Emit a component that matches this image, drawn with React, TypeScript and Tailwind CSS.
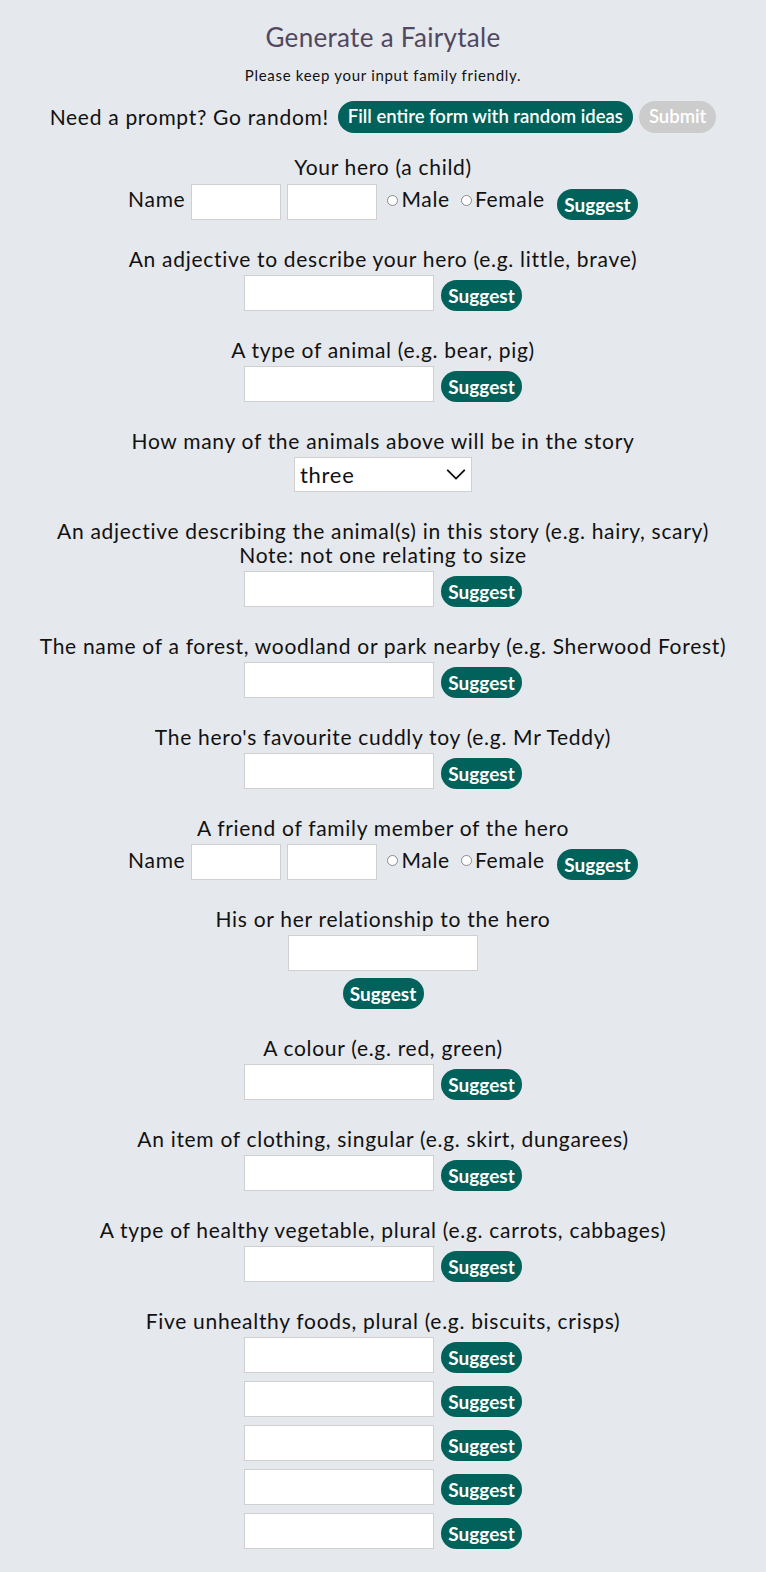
import React from "react";

const labelFont = { fontFamily: "Lato, 'Noto Sans', sans-serif" };

function Suggest() {
  return (
    <button
      type="button"
      className="h-[31px] w-[81px] rounded-full bg-[#00625a] font-['Lato',sans-serif] text-[19px] font-bold leading-none tracking-normal text-white"
    >
      Suggest
    </button>
  );
}

function TextBox({ w = "w-[190px]" }: { w?: string }) {
  return <input type="text" className={`h-[36px] ${w} border border-[#cfcfcf] bg-white`} />;
}

function InputRow() {
  return (
    <div className="flex items-end justify-center gap-[7px]">
      <TextBox />
      <Suggest />
    </div>
  );
}

function Radio({ label }: { label: string }) {
  return (
    <label className="flex items-center gap-[3px]">
      <span className="mt-[3px] inline-block h-[11px] w-[11px] rounded-full border border-[#8a8a8a] bg-white" />
      <span>{label}</span>
    </label>
  );
}

function PersonRow() {
  return (
    <div className="flex items-end justify-center">
      <span className="mb-[5px] mr-[6px]">Name</span>
      <TextBox w="w-[90px]" />
      <span className="w-[6px]" />
      <TextBox w="w-[90px]" />
      <div className="mb-[5px] ml-[10px] mr-[12px] flex gap-[11px]">
        <Radio label="Male" />
        <Radio label="Female" />
      </div>
      <Suggest />
    </div>
  );
}

function Section({ title, children }: { title: React.ReactNode; children: React.ReactNode }) {
  return (
    <section className="mb-[27px] flex flex-col items-center">
      <div className="mb-[4px] text-center leading-[24px]">{title}</div>
      {children}
    </section>
  );
}

const simple = [
  "An adjective to describe your hero (e.g. little, brave)",
  "A type of animal (e.g. bear, pig)",
];

export default function App() {
  return (
    <main
      className="min-h-[1572px] bg-[#e5e8ec] pt-[21px] text-[21px] tracking-[0.7px] text-[#111]"
      style={labelFont}
    >
      <h1 className="text-center text-[26px] leading-[32px] tracking-[0.3px] text-[#524760]">Generate a Fairytale</h1>
      <p className="mt-[12px] text-center text-[15px] leading-[20px] tracking-[0.7px]">
        Please keep your input family friendly.
      </p>

      <div className="mt-[16px] mb-[22px] flex items-center justify-center">
        <span>Need a prompt? Go random!</span>
        <button
          type="button"
          className="ml-[9px] h-[32px] rounded-full bg-[#00625a] px-[10px] text-[18.5px] font-semibold tracking-normal text-white"
        >
          Fill entire form with random ideas
        </button>
        <button
          type="button"
          className="ml-[6px] h-[32px] rounded-full bg-[#cccccc] px-[10px] text-[18.5px] font-semibold tracking-normal text-white"
        >
          Submit
        </button>
      </div>

      <Section title="Your hero (a child)">
        <PersonRow />
      </Section>

      {simple.map((t) => (
        <Section key={t} title={t}>
          <InputRow />
        </Section>
      ))}

      <Section title="How many of the animals above will be in the story">
        <div className="flex h-[35px] w-[178px] items-center justify-between border border-[#cfcfcf] bg-white pl-[5px] pr-[4px] text-[22px]">
          <span>three</span>
          <svg width="22" height="22" viewBox="0 0 24 24" fill="none" stroke="#111" strokeWidth="2" strokeLinecap="round" strokeLinejoin="round">
            <path d="M3 8l9 9 9-9" />
          </svg>
        </div>
      </Section>

      <Section
        title={
          <>
            An adjective describing the animal(s) in this story (e.g. hairy, scary)
            <br />
            Note: not one relating to size
          </>
        }
      >
        <InputRow />
      </Section>

      <Section title="The name of a forest, woodland or park nearby (e.g. Sherwood Forest)">
        <InputRow />
      </Section>

      <Section title="The hero's favourite cuddly toy (e.g. Mr Teddy)">
        <InputRow />
      </Section>

      <Section title="A friend of family member of the hero">
        <PersonRow />
      </Section>

      <Section title="His or her relationship to the hero">
        <TextBox />
        <div className="mt-[6px]">
          <Suggest />
        </div>
      </Section>

      <Section title="A colour (e.g. red, green)">
        <InputRow />
      </Section>

      <Section title="An item of clothing, singular (e.g. skirt, dungarees)">
        <InputRow />
      </Section>

      <Section title="A type of healthy vegetable, plural (e.g. carrots, cabbages)">
        <InputRow />
      </Section>

      <Section title="Five unhealthy foods, plural (e.g. biscuits, crisps)">
        <div className="flex flex-col gap-[8px]">
          {[0, 1, 2, 3, 4].map((i) => (
            <InputRow key={i} />
          ))}
        </div>
      </Section>
    </main>
  );
}
